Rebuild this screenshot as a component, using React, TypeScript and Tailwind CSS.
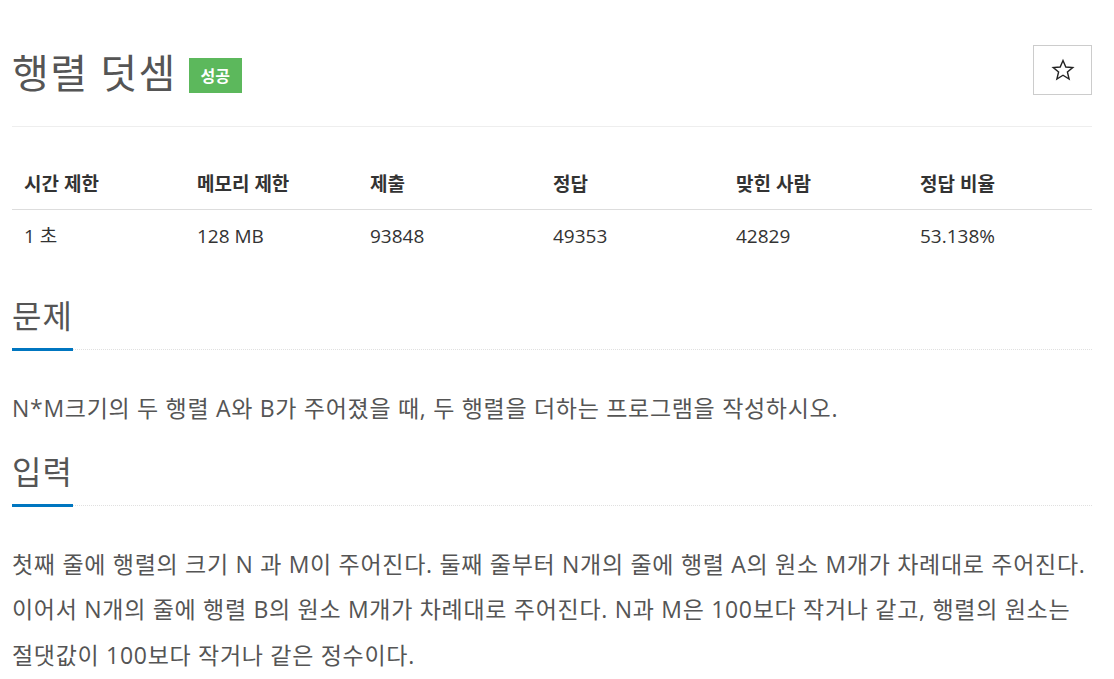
import React from "react";

const cols = [
  { h: "시간 제한", v: "1 초", w: "w-[173px]" },
  { h: "메모리 제한", v: "128 MB", w: "w-[173px]" },
  { h: "제출", v: "93848", w: "w-[183px]" },
  { h: "정답", v: "49353", w: "w-[183px]" },
  { h: "맞힌 사람", v: "42829", w: "w-[184px]" },
  { h: "정답 비율", v: "53.138%", w: "w-[184px]" },
];

function Headline({ children }: { children: React.ReactNode }) {
  return (
    <div className="border-b border-dotted border-[#e0e0e0]">
      <h2 className="block w-fit text-[32px] leading-[33px] tracking-[1px] font-normal text-[#555555] pb-[16px] border-b-[3px] border-[#0076c0] mb-[-2px]">
        {children}
      </h2>
    </div>
  );
}

export default function App() {
  return (
    <div className="min-h-[679px] bg-white pl-[12px] pr-[22px] font-['Open_Sans','Noto_Sans_CJK_KR',sans-serif]">
      {/* header */}
      <div className="flex items-start justify-between pt-[45px] pb-[30px] border-b border-[#eeeeee]">
        <div className="flex items-start">
          <h1 className="mt-[5px] text-[40px] leading-[46px] tracking-[1.4px] font-normal text-[#555555]">행렬 덧셈</h1>
          <span className="ml-[12px] mt-[13px] h-[35px] px-[12px] flex items-center bg-[#5cb85c] text-white text-[16px] font-bold">
            성공
          </span>
        </div>
        <button className="w-[59px] h-[50px] border border-[#cccccc] bg-white flex items-center justify-center">
          <svg width="24" height="24" viewBox="0 0 24 24" fill="none" stroke="#222222" strokeWidth="1.4" strokeLinejoin="miter">
            <polygon points="12,2.5 14.8,9 21.8,9.5 16.4,14 18.1,21 12,17.2 5.9,21 7.6,14 2.2,9.5 9.2,9" />
          </svg>
        </button>
      </div>

      {/* info table */}
      <table className="table-fixed w-full mt-[32px] text-[#333333]">
        <thead>
          <tr className="border-b border-[#dddddd]">
            {cols.map((c) => (
              <th key={c.h} className={`${c.w} h-[50px] px-[12px] text-left align-middle text-[19px] font-bold`}>
                {c.h}
              </th>
            ))}
          </tr>
        </thead>
        <tbody>
          <tr>
            {cols.map((c) => (
              <td key={c.h} className="h-[53px] px-[12px] text-left align-middle text-[19px]">
                {c.v}
              </td>
            ))}
          </tr>
        </tbody>
      </table>

      {/* 문제 */}
      <section className="mt-[37px]">
        <Headline>문제</Headline>
        <p className="mt-[36px] text-[23px] leading-[45.5px] tracking-[0.7px] text-[#555555]">
          N*M크기의 두 행렬 A와 B가 주어졌을 때, 두 행렬을 더하는 프로그램을 작성하시오.
        </p>
      </section>

      {/* 입력 */}
      <section className="mt-[23px]">
        <Headline>입력</Headline>
        <p className="mt-[36px] text-[23px] leading-[45.5px] tracking-[0.7px] text-[#555555] whitespace-nowrap">
          첫째 줄에 행렬의 크기 N 과 M이 주어진다. 둘째 줄부터 N개의 줄에 행렬 A의 원소 M개가 차례대로 주어진다.
          <br />
          이어서 N개의 줄에 행렬 B의 원소 M개가 차례대로 주어진다. N과 M은 100보다 작거나 같고, 행렬의 원소는
          <br />
          절댓값이 100보다 작거나 같은 정수이다.
        </p>
      </section>
    </div>
  );
}
